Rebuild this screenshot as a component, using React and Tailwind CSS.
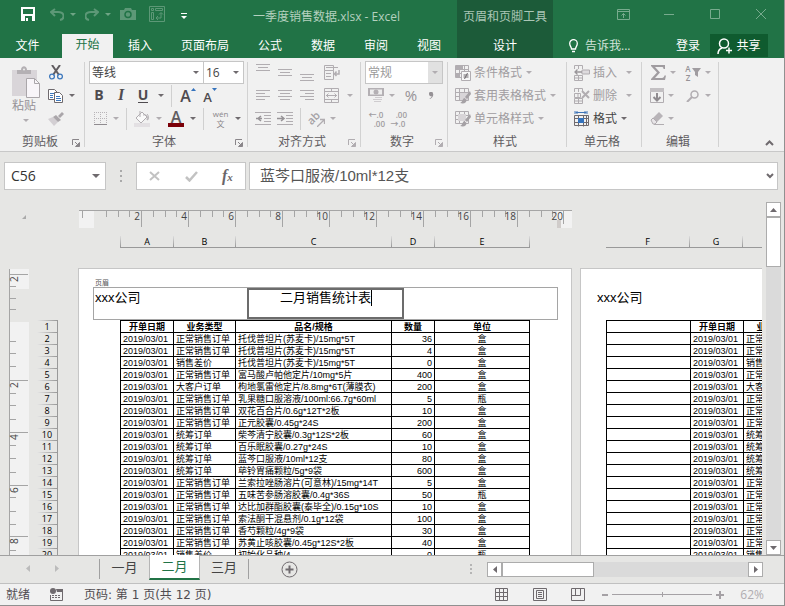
import React from "react";

const G = "#b1adb1";
const D = "#6f6a6e";

function Svg({ w, h, children, className = "" }) {
  return (
    <svg width={w} height={h} viewBox={`0 0 ${w} ${h}`} className={`block shrink-0 ${className}`} fill="none" aria-hidden="true">
      {children}
    </svg>
  );
}

function Arrow({ color = G }) {
  return <Svg w={6} h={3}><path d="M0 0h6L3 3z" fill={color} /></Svg>;
}

/* A ribbon button: "w" is a width class, so that columns of buttons line up. */
function Btn({ w, label, children, className = "" }) {
  return (
    <button type="button" aria-label={label} className={`flex h-[23px] shrink-0 items-center justify-center ${w} ${className}`}>
      {children}
    </button>
  );
}

function Sep({ m = "mx-1" }) {
  return <span className={`h-[22px] w-px shrink-0 bg-[#d0d0d0] ${m}`} />;
}

function Launcher({ color = G }) {
  return (
    <button type="button" aria-label="更多选项" className="p-0">
      <Svg w={8} h={8}>
        <path d="M.5 6V.5H7M3 3l3 3" stroke={color} />
        <path d="M7.500 3.500v4h-4z" fill={color} stroke={color} />
      </Svg>
    </button>
  );
}

function Group({ w, name, launcher, launcherColor, children }) {
  return (
    <section className={`flex shrink-0 ${w}`} aria-label={name}>
      <div className="flex min-w-0 flex-1 flex-col">
        {children}
        <div className="flex h-[21px] shrink-0 items-center pt-[2px] text-[#605c5f]">
          <span className="w-2" />
          <span className="flex-1 text-center">{name}</span>
          <span className="flex w-3 pt-[2px]">{launcher && <Launcher color={launcherColor} />}</span>
        </div>
      </div>
      <span className="mt-px mb-1 w-px bg-[#d2d2d2]" />
    </section>
  );
}

function Row({ children, className = "" }) {
  return <div className={`flex h-[23px] shrink-0 items-center ${className}`}>{children}</div>;
}

function Lines({ rows, className = "" }) {
  return (
    <Svg w={14} h={18} className={className}>
      {rows.map(([x, w, y]) => <path key={y} d={`M${x} ${y}.5h${w}`} stroke={G} />)}
    </Svg>
  );
}

function Box({ w, label, value, disabled }) {
  return (
    <label className={`flex h-[23px] items-center border border-[#c6c6c6] bg-white ${w}`}>
      <select aria-label={label} defaultValue={value} className={`h-full min-w-0 flex-1 appearance-none bg-transparent pl-[2px] outline-none ${disabled ? "text-[#9a9a9a]" : "text-[#444]"}`}>
        <option>{value}</option>
      </select>
      <span className={`flex h-full w-[14px] items-center justify-center ${disabled ? "bg-[#e1e1e1]" : ""}`}>
        <Arrow color={disabled ? G : D} />
      </span>
    </label>
  );
}

const tabs = ["插入", "页面布局", "公式", "数据", "审阅", "视图"];

function Header() {
  return (
    <header className="flex h-[58px] shrink-0 bg-[#217346] text-white">
      <div className="flex w-[457px] shrink-0 flex-col">
        <div className="flex h-[34px] items-center">
          <div className="flex w-[196px] shrink-0 items-center pb-[6px] pl-[21px]">
            <button type="button" aria-label="保存">
              <Svg w={14} h={14}>
                <path d="M0 0h14v14H0z" fill="#fff" /><path d="M2 2h10v5H2zM4 9h7v5H4z" fill="#217346" /><path d="M5 11h2v3H5z" fill="#fff" />
              </Svg>
            </button>
            <button type="button" aria-label="撤消" className="ml-[15px]">
              <Svg w={14} h={13}><path d="M5 1L1 4l4 4M1 4h7c7 0 7 7 2 8" stroke="#5d9877" strokeWidth="2" /></Svg>
            </button>
            <span className="ml-[6px]"><Arrow color="#6fa585" /></span>
            <button type="button" aria-label="恢复" className="ml-[9px]">
              <Svg w={14} h={13}><path d="M9 1l4 3-4 4M13 4H6C-1 4-1 11 4 12" stroke="#5d9877" strokeWidth="2" /></Svg>
            </button>
            <span className="ml-[6px]"><Arrow color="#6fa585" /></span>
            <button type="button" aria-label="照相机" className="ml-[9px]">
              <Svg w={16} h={12}><path d="M0 2h4l1-2h6l1 2h4v10H0z" fill="#5d9877" /><circle cx="8" cy="6.500" r="3" stroke="#217346" strokeWidth="1.500" /></Svg>
            </button>
            <button type="button" aria-label="数据透视表" className="ml-[13px]">
              <Svg w={16} h={16}>
                <path d="M.5.500h15v15H.5z" stroke="#5d9877" />
                <path d="M2.500 2.500h2v2h-2zM6.500 2.500h7v2h-7zM2.500 6.500h2v7h-2z" stroke="#5d9877" />
                <path d="M12 7v5H7M10 8.500l2-2 2 2M9 10l-2 2 2 2" stroke="#5d9877" />
              </Svg>
            </button>
            <button type="button" aria-label="自定义快速访问工具栏" className="ml-[16px] pt-1">
              <Svg w={6} h={6}><path d="M0 .500h6" stroke="#fff" /><path d="M0 3h6L3 6z" fill="#fff" /></Svg>
            </button>
          </div>
          <div className="flex-1 text-center text-[#b4d1bf]">一季度销售数据.xlsx - Excel</div>
        </div>
        <nav className="flex h-6 items-center">
          <button type="button" className="w-[62px] pr-[7px] text-center">文件</button>
          <button type="button" className="h-6 w-[51px] bg-[#f1f1f1] pb-[2px] text-[#217346]">开始</button>
          {tabs.map((t) => <button type="button" key={t} className="pr-[14px] pb-px pl-[15px] whitespace-nowrap">{t}</button>)}
        </nav>
      </div>
      <div className="flex w-24 shrink-0 flex-col bg-[#1c5b39] text-center">
        <div className="flex h-[34px] items-center justify-center text-[#abc6b6]">页眉和页脚工具</div>
        <button type="button" className="h-6 pb-px">设计</button>
      </div>
      <div className="flex min-w-0 flex-1 flex-col">
        <div className="flex h-[34px] justify-end pb-[6px] text-[#78ab8e]">
          <button type="button" aria-label="功能区显示选项" className="flex w-[46px] items-center justify-center">
            <Svg w={13} h={11}><path d="M.5.500h12v10H.5zM.5 2.500h12M6.500 9V4.500M4.500 6.500l2-2 2 2" stroke="currentColor" /></Svg>
          </button>
          <button type="button" aria-label="最小化" className="flex w-[46px] items-center justify-center">
            <Svg w={10} h={1}><path d="M0 .500h10" stroke="currentColor" /></Svg>
          </button>
          <button type="button" aria-label="最大化" className="flex w-[46px] items-center justify-center">
            <Svg w={10} h={10}><path d="M.5.500h9v9h-9z" stroke="currentColor" /></Svg>
          </button>
          <button type="button" aria-label="关闭" className="flex w-[46px] items-center justify-center">
            <Svg w={10} h={10}><path d="M0 0l10 10M10 0L0 10" stroke="currentColor" /></Svg>
          </button>
        </div>
        <div className="flex h-6 items-center pr-4">
          <button type="button" className="ml-4 flex items-center gap-[7px] text-[#d3e3da]">
            <Svg w={9} h={14}><path d="M2.500 10C2.500 8 .7 7 .7 4.400a3.800 3.800 0 017.600 0C8.300 7 6.500 8 6.500 10zM3 12.500h3" stroke="#fff" strokeWidth="1.300" /></Svg>
            告诉我...
          </button>
          <span className="flex-1" />
          <button type="button" className="mr-[10px] pb-px">登录</button>
          <button type="button" className="mb-px flex h-[23px] w-[58px] items-center justify-center gap-1 bg-[#0f5b2f]">
            <Svg w={15} h={16}><circle cx="7" cy="5.500" r="4.500" stroke="#fff" strokeWidth="1.500" /><path d="M1 16c0-3 1.500-5 4-6M9 12.500h6M12 9.500v6" stroke="#fff" strokeWidth="1.500" /></Svg>
            共享
          </button>
        </div>
      </div>
    </header>
  );
}

const FormatIcon = ({ kind }) => (
  <Svg w={16} h={16}>
    <path d="M.5.500h13v12H.5zM.5 4.500h13M.5 8.500h13M4.500.500v12M9.500.500v12" stroke={G} />
    {kind === "cond" && <><path d="M1 1h7v3H1zM1 9h4v3H1z" fill={G} /><path d="M6.500 6.500h9v9h-9z" fill="#f7f7f7" stroke={G} /><path d="M8.500 10h5M8.500 12h5M12.500 8l-3 6" stroke={D} /></>}
    {kind !== "cond" && <><path d={kind === "table" ? "M5 5h8v7H5z" : "M3 3h8v7H3z"} fill="#d8d5d8" /><path d="M15 3l-5 6 2 2 4-5zM9.500 10c-2 0-1.500 4-4.500 5 4 1 6.500 0 6.500-3z" fill="#a5a1a5" /></>}
  </Svg>
);

const CellIcon = ({ kind }) => (
  <Svg w={16} h={16}>
    {kind === "format" ? (
      <>
        <path d="M1 0v3M13 0v3M2 1.500h10M3.500 0L2 1.500 3.500 3M10.500 0L12 1.500 10.500 3" stroke="#3f75b8" />
        <path d="M.5 4.500h14v10H.5zM.5 7.500h14M.5 11.500h14M4.500 4.500v11M9.500 4.500v11M12.500 4.500v10" stroke={D} />
        <path d="M4 7h6v5H4z" fill="#3573bd" />
      </>
    ) : (
      <>
        <path d="M.5 4V.500h8V4M4.500.500V4M.5 15.500v-5h8v5zM4.500 10.500v5M.5 13h8" stroke={G} />
        {kind === "insert" ? <><path d="M8 5h7.500v4H8z" fill="#dedbde" stroke={G} /><path d="M8 7H1M3.500 4.500L1 7l2.500 2.500" stroke="#9a969a" strokeWidth="1.300" /></> : <><path d="M.5 5.500h6v4H.5zM4 5.500v4" stroke={G} /><path d="M8 3l7 7M15 3l-7 7" stroke={G} strokeWidth="2" /></>}
      </>
    )}
  </Svg>
);

function Ribbon() {
  return (
    <div className="flex h-[94px] shrink-0 border-b border-[#c8c8c8] bg-[#f1f1f1] pt-[3px]">
      <Group w="w-[85px]" name="剪贴板" launcher launcherColor="#8a868a">
        <div className="flex h-[69px] shrink-0">
          <button type="button" className="flex w-[46px] flex-col items-start pt-[5px] pl-3 text-[#969296]">
            <Svg w={29} h={32}>
              <path d="M0 4h25v26H0z" fill="#d9d5d9" /><path d="M5 8V4h4c0-5 6-5 6 0h4v4z" fill="#b4b0b4" /><circle cx="12" cy="3.500" r="1" fill="#eee" />
              <path d="M14.500 12.500h8l5 5v14h-13z" fill="#f8f5f9" stroke="#aaa6aa" /><path d="M22.500 12.500v5h5" stroke="#aaa6aa" />
            </Svg>
            <span className="leading-4">粘贴</span>
            <span className="mt-[5px] ml-[11px]"><Arrow /></span>
          </button>
          <div className="flex flex-col">
            <Btn w="w-5" label="剪切">
              <Svg w={14} h={15}><path d="M3 0l7 10M11 0L4 10" stroke="#605c60" strokeWidth="2" /><circle cx="3" cy="11.500" r="2.400" stroke="#3f79bd" strokeWidth="1.300" /><circle cx="11" cy="11.500" r="2.400" stroke="#3f79bd" strokeWidth="1.300" /></Svg>
            </Btn>
            <Row>
              <Btn w="w-5" label="复制">
                <Svg w={16} h={14}>
                  <path d="M.5.500h6l3 3v7h-9z" fill="#fff" stroke={D} /><path d="M2 4.500h4M2 6.500h3M2 8.500h3" stroke="#3f79bd" />
                  <path d="M6.500 3.500h5l3 3v7h-8z" fill="#fff" stroke={D} /><path d="M8 7.500h4M8 9.500h5M8 11.500h5" stroke="#3f79bd" />
                </Svg>
              </Btn>
              <Btn w="w-3" label="复制选项"><Arrow color={D} /></Btn>
            </Row>
            <Btn w="w-5" label="格式刷">
              <Svg w={16} h={14}><path d="M0 7l5-2 5 5-4 4z" fill="#d3cfd3" /><path d="M5 5l3-2 5 5-3 2zM10 4l4-4 2 2-4 4z" fill="#aaa6aa" /></Svg>
            </Btn>
          </div>
        </div>
      </Group>

      <Group w="w-[163px]" name="字体" launcher launcherColor="#8a868a">
        <Row className="pl-1"><Box w="w-[115px]" label="字体" value="等线" /><Box w="-ml-px w-[41px]" label="字号" value="16" /></Row>
        <Row className="pl-[3px] text-sm text-[#4f4b4f]">
          <Btn w="w-[22px]" label="加粗" className="pb-px"><b>B</b></Btn>
          <Btn w="w-[22px]" label="倾斜" className="pb-px"><b className="font-['Liberation_Serif',serif] text-base italic">I</b></Btn>
          <Btn w="w-[22px]" label="下划线"><span className="border-b border-[#4f4b4f] leading-[14px] font-bold">U</span></Btn>
          <Btn w="w-[14px]" label="下划线选项"><Arrow color={D} /></Btn>
          <Sep m="mr-1 ml-[3px]" />
          <Btn w="w-6" label="增大字号"><span className="pt-px text-base font-semibold">A</span><Svg w={5} h={3} className="mb-3"><path d="M0 3h5L2.500 0z" fill="#3573bd" /></Svg></Btn>
          <Btn w="w-5" label="减小字号"><span className="pt-[3px] text-[13px] font-semibold">A</span><Svg w={5} h={3} className="mb-3"><path d="M0 0h5L2.500 3z" fill="#3573bd" /></Svg></Btn>
        </Row>
        <Row className="pl-[5px]">
          <Btn w="w-5" label="边框"><Svg w={13} h={13}><path d="M.5 0v12M6.500 0v12M12.500 0v12M0 .500h13M0 6.500h13" stroke="#b8b4b8" strokeDasharray="1 1" /><path d="M0 12.500h13" stroke="#8f8b8f" /></Svg></Btn>
          <Btn w="w-3" label="边框选项"><Arrow /></Btn>
          <Sep m="mx-1" />
          <Btn w="w-[22px]" label="填充颜色"><Svg w={16} h={16}><path d="M2 7l6-6 5 5-6 6z" stroke={G} fill="#fafafa" /><path d="M6 0v6M9 4c4-1 5 2 4 5 2 0 2-4 0-6" stroke={G} /><path d="M0 12h16v4H0z" fill="#e3e0e3" /></Svg></Btn>
          <Btn w="w-3" label="填充选项"><Arrow /></Btn>
          <Btn w="w-[22px]" label="字体颜色" className="flex-col"><span className="h-[12px] text-base leading-[12px] font-semibold text-[#605c60]">A</span><span className="h-1 w-4 bg-[#7b0008]" /></Btn>
          <Btn w="w-3" label="颜色选项"><Arrow color={D} /></Btn>
          <Sep m="mx-1" />
          <Btn w="w-[25px]" label="拼音" className="flex-col text-[8px] leading-[10px] text-[#8a868a]"><span>wén</span><span>文</span></Btn>
          <Btn w="w-[10px]" label="拼音选项"><Arrow color={D} /></Btn>
        </Row>
      </Group>

      <Group w="w-[113px]" name="对齐方式" launcher>
        <Row className="pl-1">
          <Btn w="w-[22px]" label="顶端对齐"><Lines rows={[[0, 14, 0], [2, 10, 3], [0, 14, 6]]} /></Btn>
          <Btn w="w-[22px]" label="垂直居中"><Lines rows={[[0, 14, 5], [2, 10, 8], [0, 14, 11]]} /></Btn>
          <Btn w="w-[22px]" label="底端对齐"><Lines rows={[[0, 14, 10], [2, 10, 13], [0, 14, 16]]} /></Btn>
          <Btn w="w-[28px]" label="自动换行"><Svg w={16} h={15}><path d="M.5.500h9v5h-9zM.5 5.500v9h9v-9M2 2.500h12M2 8.500h5M2 11.500h5" stroke={G} /><path d="M15 5v4h-4M12.500 6.500L10.500 9l2 2" stroke={G} strokeWidth="1.500" /></Svg></Btn>
        </Row>
        <Row className="pl-1">
          <Btn w="w-[22px]" label="左对齐"><Lines rows={[[0, 14, 3], [0, 9, 6], [0, 14, 9], [0, 9, 12]]} /></Btn>
          <Btn w="w-[22px]" label="居中"><Lines rows={[[0, 14, 3], [2, 10, 6], [0, 14, 9], [2, 10, 12]]} /></Btn>
          <Btn w="w-[22px]" label="右对齐"><Lines rows={[[0, 14, 3], [5, 9, 6], [0, 14, 9], [5, 9, 12]]} /></Btn>
          <Btn w="w-[26px]" label="合并后居中"><Svg w={15} h={15}><path d="M.5.500h14v14H.5zM.5 3.500h14M.5 11.500h14M7.500.500v3M7.500 11.500v3M2 7.500h11M4.500 5.500l-2 2 2 2M10.500 5.500l2 2-2 2" stroke={G} /></Svg></Btn>
          <Btn w="w-3" label="合并选项"><Arrow /></Btn>
        </Row>
        <Row className="pl-1">
          {["M6 4L3 6.500 6 9M1 6.500h6", "M4 4l3 2.500L4 9M0 6.500h6"].map((d, i) => (
            <Btn key={d} w="w-[22px]" label={i ? "增加缩进" : "减少缩进"}><Svg w={16} h={13}><path d="M0 .500h16M9 3.500h7M9 6.500h7M9 9.500h7M0 12.500h16" stroke={G} /><path d={d} stroke="#969296" strokeWidth="1.500" /></Svg></Btn>
          ))}
          <Sep m="mx-1" />
          <Btn w="w-[22px]" label="方向"><span className="-rotate-45 text-[11px] font-semibold text-[#a5a1a5]">ab</span><Svg w={8} h={9} className="mt-2 -ml-1"><path d="M0 9l7-7M3 1.500h4.500V6" stroke={G} strokeWidth="1.300" /></Svg></Btn>
          <Btn w="w-3" label="方向选项"><Arrow /></Btn>
        </Row>
      </Group>

      <Group w="w-[87px]" name="数字" launcher>
        <Row className="pl-1"><Box w="w-[78px]" label="数字格式" value="常规" disabled /></Row>
        <Row className="pl-[6px] text-[#969296]">
          <Btn w="w-[18px]" label="会计数字格式"><Svg w={16} h={15}><path d="M0 0h16v8H0z" fill="#b4b0b4" /><path d="M2 1.500h12v5H2z" fill="#eee" /><circle cx="8" cy="4" r="2.500" fill="#b4b0b4" /><path d="M5 8h10v7H5z" fill="#f1f1f1" /><path d="M7 9.500h7M5 11.500h6M6 13.500h7M10 11.500h4" stroke="#cfcccf" /></Svg></Btn>
          <Btn w="w-[14px]" label="货币选项"><Arrow /></Btn>
          <Btn w="w-6" label="百分比样式" className="pb-px text-[15px]">%</Btn>
          <Btn w="w-4" label="千位分隔样式"><Svg w={5} h={7}><path d="M0 2a2 2 0 014-.500C5 4 3 6 1 7l-.500-.500C2 6 2.500 5 2.500 4 1 4.500 0 3.500 0 2z" fill="#969296" /></Svg></Btn>
        </Row>
        <Row className="pl-[6px] text-[8px] leading-[9px] font-semibold text-[#a09ca0]">
          <Btn w="w-[18px]" label="增加小数位数" className="flex-col"><span className="whitespace-nowrap">←.0</span><span className="self-end">.00</span></Btn>
          <span className="w-1" />
          <Btn w="w-[18px]" label="减少小数位数" className="flex-col"><span className="self-end">.00</span><span className="whitespace-nowrap">→.0</span></Btn>
        </Row>
      </Group>

      <Group w="w-[119px]" name="样式">
        {[["cond", "条件格式"], ["table", "套用表格格式"], ["cell", "单元格样式"]].map(([k, t]) => (
          <button type="button" key={k} className="flex h-[23px] shrink-0 items-center pl-[7px] whitespace-nowrap text-[#a09ca0]">
            <FormatIcon kind={k} /><span className="mr-1 ml-[3px]">{t}</span><Arrow />
          </button>
        ))}
      </Group>

      <Group w="w-[75px]" name="单元格">
        {[["insert", "插入"], ["delete", "删除"], ["format", "格式"]].map(([k, t]) => (
          <button type="button" key={k} className={`flex h-[23px] shrink-0 items-center pl-[7px] whitespace-nowrap ${k === "format" ? "text-[#444]" : "text-[#a09ca0]"}`}>
            <CellIcon kind={k} /><span className={k === "format" ? "mr-1 ml-[3px]" : "mr-[9px] ml-[3px]"}>{t}</span><Arrow color={k === "format" ? D : G} />
          </button>
        ))}
      </Group>

      <Group w="w-[77px]" name="编辑">
        <Row className="pl-[7px]">
          <Btn w="w-[18px]" label="自动求和"><Svg w={15} h={15}><path d="M0 0h14v4h-1.500c0-1.500-.5-2-2-2H4l5 5.500L4 13h7c1.500 0 2-1 2.500-2.500H15L14 15H0v-1l6-6.500L0 1z" fill="#a09ca0" /></Svg></Btn>
          <Btn w="w-3" label="求和选项"><Arrow /></Btn>
          <span className="w-[5px]" />
          <Btn w="w-[18px]" label="排序和筛选"><span className="flex flex-col text-[8px] leading-[9px] font-semibold text-[#969296]"><span>A</span><span>Z</span></span><Svg w={9} h={9} className="ml-px"><path d="M0 0h9L6 4v5L3 7V4z" fill="#a09ca0" /></Svg></Btn>
          <Btn w="w-[12px]" label="排序选项"><Arrow /></Btn>
        </Row>
        <Row className="pl-[7px]">
          <Btn w="w-[16px]" label="填充"><Svg w={14} h={15}><path d="M.5.500h13v14H.5zM0 3h14" stroke={G} /><path d="M0 0h14v4H0z" fill="#c3c0c3" /><path d="M7 5v8M3.500 9L7 12.500 10.500 9" stroke="#8f8b8f" strokeWidth="2" /></Svg></Btn>
          <Btn w="w-3" label="填充选项"><Arrow /></Btn>
          <span className="w-[7px]" />
          <Btn w="w-[16px]" label="查找和选择"><Svg w={13} h={12}><circle cx="8.500" cy="4.500" r="3.500" stroke={G} strokeWidth="1.500" /><path d="M6 7l-5 5" stroke={G} strokeWidth="2" /></Svg></Btn>
          <span className="w-[2px]" />
          <Btn w="w-3" label="查找选项"><Arrow /></Btn>
        </Row>
        <Row className="pl-[7px]">
          <Btn w="w-[16px]" label="清除"><Svg w={14} h={13}><path d="M1 8l8-8 4 4-8 8z" fill="#b8b4b8" /><path d="M1 8l2-2 4 4-2 2H3z" fill="#e8e5e8" stroke={G} /><path d="M4 12.500h10" stroke={G} /></Svg></Btn>
          <Btn w="w-3" label="清除选项"><Arrow /></Btn>
        </Row>
      </Group>
      <div className="flex flex-1 items-end justify-end pr-[10px] pb-[5px]">
        <button type="button" aria-label="折叠功能区"><Svg w={9} h={6}><path d="M1 5l3.500-3.500L8 5" stroke={D} strokeWidth="2" /></Svg></button>
      </div>
    </div>
  );
}

function FormulaBar() {
  return (
    <div className="flex h-[50px] shrink-0 items-start pt-[10px] pr-[6px] pl-1 text-[#333]">
      <div className="flex h-7 w-[102px] items-center border border-[#c6c6c6] bg-white pr-[5px]">
        <input aria-label="名称框" defaultValue="C56" className="min-w-0 flex-1 bg-transparent pl-[6px] text-sm outline-none" />
        <Svg w={8} h={4}><path d="M0 0h8L4 4z" fill={D} /></Svg>
      </div>
      <span className="flex h-7 w-[30px] items-center justify-center">
        <Svg w={2} h={12}><path d="M0 0h2v2H0zM0 5h2v2H0zM0 10h2v2H0z" fill="#aaa" /></Svg>
      </span>
      <div className="flex h-7 w-[110px] items-center justify-around border border-[#c6c6c6] bg-white">
        <button type="button" aria-label="取消"><Svg w={11} h={10}><path d="M1 1l9 8M10 1L1 9" stroke="#c2c2c2" strokeWidth="2" /></Svg></button>
        <button type="button" aria-label="输入"><Svg w={13} h={11}><path d="M1 6l3.500 3.500L12 1" stroke="#c2c2c2" strokeWidth="2.500" /></Svg></button>
        <button type="button" aria-label="插入函数" className="font-['Liberation_Serif',serif] text-base leading-4 font-bold text-[#6a666a] italic">f<span className="text-[11px]">x</span></button>
      </div>
      <div className="ml-[3px] flex h-7 flex-1 items-center border border-[#c6c6c6] bg-white pr-[3px]">
        <input aria-label="编辑栏" defaultValue="蓝芩口服液/10ml*12支" className="min-w-0 flex-1 bg-transparent pl-[10px] font-['Liberation_Sans','Noto_Sans_CJK_SC',sans-serif] text-[15px] text-[#555] outline-none" />
        <button type="button" aria-label="展开编辑栏"><Svg w={8} h={6}><path d="M1 1l3 3 3-3" stroke={D} strokeWidth="2" /></Svg></button>
      </div>
    </div>
  );
}

const N = "正常销售订单";
const T = "统筹订单";
const data = [
  [N, "托伐普坦片(苏麦卡)/15mg*5T", 36, "盒"],
  [N, "托伐普坦片(苏麦卡)/15mg*5T", 4, "盒"],
  ["销售差价", "托伐普坦片(苏麦卡)/15mg*5T", 0, "盒"],
  [N, "富马酸卢帕他定片/10mg*5片", 400, "盒"],
  ["大客户订单", "枸地氯雷他定片/8.8mg*6T(薄膜衣)", 200, "盒"],
  [N, "乳果糖口服溶液/100ml:66.7g*60ml", 5, "瓶"],
  [N, "双花百合片/0.6g*12T*2板", 10, "盒"],
  [N, "正元胶囊/0.45g*24S", 200, "盒"],
  [T, "柴芩清宁胶囊/0.3g*12S*2板", 60, "盒"],
  [T, "百乐眠胶囊/0.27g*24S", 10, "盒"],
  [T, "蓝芩口服液/10ml*12支", 80, "盒"],
  [T, "荜铃胃痛颗粒/5g*9袋", 600, "盒"],
  [N, "兰索拉唑肠溶片(可意林)/15mg*14T", 5, "盒"],
  [N, "五味苦参肠溶胶囊/0.4g*36S", 50, "瓶"],
  [N, "达比加群酯胶囊(泰毕全)/0.15g*10S", 10, "盒"],
  [N, "索法酮干混悬剂/0.1g*12袋", 100, "盒"],
  [N, "香芍颗粒/4g*9袋", 30, "盒"],
  [N, "苏黄止咳胶囊/0.45g*12S*2板", 40, "盒"],
  ["销售差价", "初始化品种/4", 0, "瓶"],
];

const tableCls = "table-fixed border-collapse font-['Liberation_Sans','Noto_Sans_CJK_SC',sans-serif] text-[9px] leading-[10px] whitespace-nowrap text-black [&_td]:h-3 [&_td]:overflow-hidden [&_td]:border [&_td]:border-black [&_td]:px-[2px] [&_td]:pt-px [&_td]:pb-0 [&_th]:h-3 [&_th]:overflow-hidden [&_th]:border [&_th]:border-black [&_th]:px-0 [&_th]:pt-px [&_th]:pb-0";

function ColHeads({ cols, className }) {
  return (
    <div className={`mt-2 mb-5 flex h-3 border-b border-[#999] text-[9px] leading-3 text-black ${className}`}>
      <span className="w-px bg-linear-to-b from-[#ddd] to-[#999]" />
      {cols.map(([c, w]) => (
        <span key={c} className={`flex shrink-0 ${w}`}>
          <span className="flex-1 text-center">{c}</span>
          <span className="w-px bg-linear-to-b from-[#ddd] to-[#999]" />
        </span>
      ))}
    </div>
  );
}

const hTicks = Array.from({ length: 39 }, (_, i) => i + 1);
const vTicks = [5, 17, 29, 40, 72, 84, 97, 111, 124, 136, 150, 163, 176, 189, 203, 216, 228, 242, 255, 267, 281];
const vLabels = { 5: "2", 111: "2", 163: "4", 216: "6", 267: "8" };

function HRuler() {
  return (
    <Svg w={493} h={18} className="ml-px">
      <path d="M0 0h15v18H0zM478 0h15v18h-15z" fill="#f2f2f2" />
      <path d="M478 10h4v8h-4z" fill="#d0ccca" />
      <path d="M0 .500h493M3.500 0v8M484.500 0v14" stroke="#a5a5a5" />
      {hTicks.map((i) => {
        const x = Math.round(15 + i * 11.75) + 0.5;
        return x < 476 ? <path key={i} d={`M${x} 0v${i % 4 === 0 ? 17 : 7}`} stroke="#a5a5a5" /> : null;
      })}
      {[2, 4, 6, 8, 10, 12, 14, 16, 18, 20].map((n) => (
        <text key={n} x={14 + n * 23.500} y="10" textAnchor="end" fontSize="10" fill="#444">{n}</text>
      ))}
    </Svg>
  );
}

function VRuler() {
  return (
    <Svg w={20} h={500} className="ml-[9px] overflow-visible">
      <path d="M0 0h20v20H0zM0 53h20v447H0z" fill="#f2f2f2" />
      <path d="M.5 0v500" stroke="#a5a5a5" />
      {vTicks.map((y) => <path key={y} d={`M0 ${y}.5h${vLabels[y] ? 19 : 7}`} stroke="#a5a5a5" />)}
      {Object.entries(vLabels).map(([y, t]) => (
        <text key={y} transform={`translate(9 ${Number(y) + 8}) rotate(-90)`} fontSize="10" fill="#444">{t}</text>
      ))}
    </Svg>
  );
}

function Sheet() {
  return (
    <div className="flex min-h-0 flex-1">
      <div className="grid min-w-0 flex-1 grid-cols-[78px_494px_minmax(0,1fr)] grid-rows-[66px_minmax(0,1fr)] overflow-hidden">
        <div className="pt-[13px] pl-[22px]"><Svg w={4} h={4}><path d="M4 0v4H0z" fill="#aaa" /></Svg></div>
        <div className="pt-2">
          <HRuler />
          <ColHeads className="ml-[42px] w-[410px]" cols={[["A", "w-[53px]"], ["B", "w-[62px]"], ["C", "w-[156px]"], ["D", "w-[43px]"], ["E", "w-[95px]"]]} />
        </div>
        <div className="overflow-hidden pt-[26px]">
          <ColHeads className="ml-[34px]" cols={[["F", "w-[84px]"], ["G", "w-[53px]"], ["", "w-[62px]"]]} />
        </div>

        <div className="flex overflow-hidden pt-px">
          <VRuler />
          <div className="mt-[51px] ml-[8px] w-[21px] border-r border-[#999] text-center text-[9px] leading-[10px] text-black">
            <div className="h-px bg-linear-to-r from-[#e6e6e6] to-[#999]" />
            {Array.from({ length: 20 }, (_, i) => (
              <div key={i}>
                <div className="h-[11px] pt-px">{i + 1}</div>
                <div className="h-px bg-linear-to-r from-[#e6e6e6] to-[#999]" />
              </div>
            ))}
          </div>
        </div>

        <div className="overflow-hidden border border-b-0 border-[#c6c6c6] bg-white">
          <div className="mt-[10px] ml-4 text-[7px] leading-[8px] text-[#555]">页眉</div>
          <div className="mr-[13px] ml-[14px] flex h-[33px] border border-[#a5a5a5] font-['Liberation_Sans','Noto_Sans_CJK_SC',sans-serif] text-[13px] leading-5 text-black">
            <input aria-label="页眉左侧" defaultValue="xxx公司" className="h-5 w-[153px] pl-px outline-none" />
            <div className="flex w-[157px] shrink-0 justify-center border-2 border-[#6c6c6c] pl-px">
              <input aria-label="页眉中部" defaultValue="二月销售统计表" className="field-sizing-content h-4 leading-4 outline-none" />
              <span className="h-4 w-px bg-black" />
            </div>
            <span className="flex-1" />
          </div>
          <table className={`ml-[41px] w-[410px] ${tableCls}`}>
            <colgroup><col className="w-[53px]" /><col className="w-[62px]" /><col className="w-[156px]" /><col className="w-[43px]" /><col /></colgroup>
            <thead><tr><th>开单日期</th><th>业务类型</th><th>品名/规格</th><th>数量</th><th>单位</th></tr></thead>
            <tbody>
              {data.map(([type, name, qty, unit], i) => (
                <tr key={i}><td>2019/03/01</td><td>{type}</td><td>{name}</td><td className="text-right">{qty}</td><td className="text-center">{unit}</td></tr>
              ))}
            </tbody>
          </table>
        </div>

        <div className="ml-2 overflow-hidden border-t border-l border-[#c6c6c6] bg-white">
          <div className="mt-[19px] ml-4 h-8 font-['Liberation_Sans','Noto_Sans_CJK_SC',sans-serif] text-[13px] leading-5 text-black">xxx公司</div>
          <table className={`ml-[25px] w-[200px] ${tableCls}`}>
            <colgroup><col className="w-[84px]" /><col className="w-[53px]" /><col /></colgroup>
            <thead><tr><th /><th>开单日期</th><th>业务类型</th></tr></thead>
            <tbody>{data.map(([type], i) => <tr key={i}><td /><td>2019/03/01</td><td>{type}</td></tr>)}</tbody>
          </table>
        </div>
      </div>
      <div className="mr-[3px] ml-1 flex w-[15px] flex-col bg-[#dadada]">
        <button type="button" aria-label="向上滚动" className="flex h-[15px] items-center justify-center border border-[#acacac] bg-white"><Svg w={7} h={4}><path d="M0 4h7L3.500 0z" fill={D} /></Svg></button>
        <div className="h-[50px] border border-[#acacac] bg-white" />
        <span className="flex-1" />
        <button type="button" aria-label="向下滚动" className="flex h-[15px] items-center justify-center border border-[#acacac] bg-white"><Svg w={7} h={4}><path d="M0 0h7L3.500 4z" fill={D} /></Svg></button>
      </div>
    </div>
  );
}

function SheetTabs() {
  return (
    <div className="flex h-[28px] shrink-0 items-start border-t border-[#a0a0a0] text-[13px] text-[#444]">
      <div className="flex h-6 w-[99px] items-center pl-[26px]">
        <button type="button" aria-label="上一张"><Svg w={4} h={7}><path d="M4 0v7L0 3.500z" fill="#bbb" /></Svg></button>
        <button type="button" aria-label="下一张" className="ml-[25px]"><Svg w={4} h={7}><path d="M0 0v7l4-3.500z" fill="#bbb" /></Svg></button>
      </div>
      <span className="mt-[3px] h-5 w-px bg-[#a0a0a0]" />
      <button type="button" className="h-6 w-[49px]">一月</button>
      <button type="button" className="-mt-px h-[25px] w-[51px] border-x border-b-2 border-x-[#b5b5b5] border-b-[#217346] bg-white text-[#217346]">二月</button>
      <button type="button" className="h-6 w-12">三月</button>
      <span className="mt-[3px] h-5 w-px bg-[#a0a0a0]" />
      <button type="button" aria-label="新工作表" className="mt-[5px] ml-8">
        <Svg w={17} h={17}><circle cx="8.500" cy="8.500" r="7.500" stroke={D} /><path d="M4.500 8.500h8M8.500 4.500v8" stroke={D} strokeWidth="2" /></Svg>
      </button>
      <span className="flex-1" />
      <span className="mt-2 mr-[15px]"><Svg w={2} h={11}><path d="M0 0h2v2H0zM0 4h2v2H0zM0 8h2v2H0z" fill="#b5b5b5" /></Svg></span>
      <div className="mt-[6px] mr-[21px] flex h-[15px] w-[276px] bg-[#dadada]">
        <button type="button" aria-label="向左滚动" className="flex w-[15px] items-center justify-center border border-[#acacac] bg-white"><Svg w={4} h={7}><path d="M4 0v7L0 3.500z" fill={D} /></Svg></button>
        <div className="w-[92px] border border-[#acacac] bg-white" />
        <span className="flex-1" />
        <button type="button" aria-label="向右滚动" className="flex w-[15px] items-center justify-center border border-[#acacac] bg-white"><Svg w={4} h={7}><path d="M0 0v7l4-3.500z" fill={D} /></Svg></button>
      </div>
    </div>
  );
}

function StatusBar() {
  return (
    <footer className="flex h-[23px] shrink-0 items-center border-t border-b border-t-[#c0c0c0] border-b-[#909090] bg-[#f1f1f1] pl-[6px] text-[#504c50]">
      <span>就绪</span>
      <button type="button" aria-label="宏录制" className="ml-5"><Svg w={13} h={13}><path d="M.5 7v5.500h12V3" stroke={D} /><path d="M2 7.500h9M2 9.500h9" stroke={D} strokeDasharray="2 1" /><path d="M6 1h7v3H7z" fill={D} /><circle cx="3" cy="3" r="3" fill={D} /></Svg></button>
      <span className="ml-[21px] font-['DejaVu_Sans','Noto_Sans_CJK_SC',sans-serif]">页码: 第 1 页(共 12 页)</span>
      <span className="flex-1" />
      <button type="button" aria-label="普通"><Svg w={13} h={13}><path d="M.5.500h12v12H.5zM.5 4.500h12M.5 8.500h12M4.500.500v12M8.500.500v12" stroke={D} /></Svg></button>
      <button type="button" aria-label="页面布局" className="ml-[25px]"><Svg w={14} h={13}><path d="M.5.500h13v12H.5zM3.500 2.500h7v8h-7zM5 4.500h4M5 6.500h4M5 8.500h4" stroke={D} /></Svg></button>
      <button type="button" aria-label="分页预览" className="ml-6"><Svg w={14} h={13}><path d="M.5.500h13v12H.5zM.5 7.500h9V.500M4.500.500v7" stroke={D} /></Svg></button>
      <button type="button" aria-label="缩小" className="ml-[17px]"><Svg w={6} h={8}><path d="M0 4h6" stroke="#a5a1a5" strokeWidth="2" /></Svg></button>
      <input type="range" aria-label="缩放" defaultValue="50" className="mx-1 h-4 w-[100px] appearance-none bg-transparent [&::-webkit-slider-runnable-track]:h-px [&::-webkit-slider-runnable-track]:bg-[#a5a1a5] [&::-webkit-slider-thumb]:-mt-[2px] [&::-webkit-slider-thumb]:h-[5px] [&::-webkit-slider-thumb]:w-px [&::-webkit-slider-thumb]:appearance-none [&::-webkit-slider-thumb]:bg-[#a5a1a5]" />
      <button type="button" aria-label="放大"><Svg w={8} h={8}><path d="M0 4h8M4 0v8" stroke="#a5a1a5" strokeWidth="2" /></Svg></button>
      <span className="mr-5 ml-4 text-[#b0acb0]">62%</span>
    </footer>
  );
}

export default function App() {
  return (
    <div className="flex h-screen flex-col overflow-hidden border-r border-[#909090] bg-[#e6e6e4] font-['Open_Sans','Noto_Sans_CJK_SC',sans-serif] text-xs">
      <Header />
      <Ribbon />
      <FormulaBar />
      <Sheet />
      <SheetTabs />
      <StatusBar />
    </div>
  );
}
